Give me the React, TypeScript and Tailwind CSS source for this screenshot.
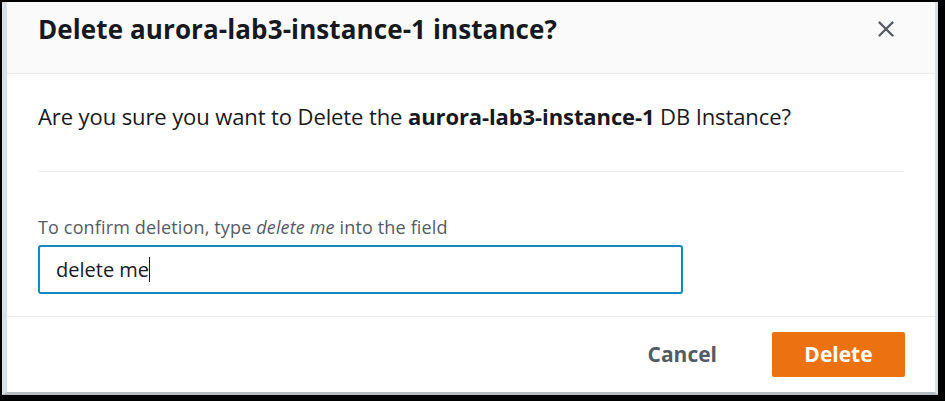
import { X } from 'lucide-react';

export default function App() {
    return (
        <div className="w-[945px] h-[401px] bg-black pt-[2px] pl-[2px] pr-[7px] pb-[6px] font-['Open_Sans',sans-serif]">
            <div className="h-full flex flex-col bg-white border-l-[5px] border-r-[3px] border-b-[3px] border-l-[#d9dfe3] border-r-[#d9dfe3] border-b-[#b4bcbf]">
                {/* Header */}
                <div className="h-[72px] shrink-0 flex items-start justify-between bg-[#fafafa] border-b border-[#eaeded] pl-[31px] pr-[36px] pt-[9px]">
                    <h2 className="text-[26px] leading-[36px] font-bold text-[#16191f] tracking-[0.1px]">
                        Delete aurora-lab3-instance-1 instance?
                    </h2>
                    <button className="mt-[5px] text-[#545b64]">
                        <X className="w-[26px] h-[26px]" strokeWidth={2.2} />
                    </button>
                </div>

                {/* Body */}
                <div className="flex-1 px-[31px] pt-[27px]">
                    <p className="text-[22px] leading-[30px] text-[#16191f] tracking-[-0.1px]">
                        Are you sure you want to Delete the <span className="font-bold">aurora-lab3-instance-1</span> DB Instance?
                    </p>
                    <div className="mt-[40px] border-t border-[#eaeded]" />
                    <label className="block mt-[42px] text-[18px] leading-[26px] text-[#545b64] tracking-[0.15px]">
                        To confirm deletion, type <em>delete me</em> into the field
                    </label>
                    <div className="mt-[5px] w-[645px] h-[49px] flex items-center border-2 border-[#0f8bc2] rounded-[3px] pl-[16px]">
                        <span className="text-[20px] text-[#16191f]">delete me</span>
                        <span className="w-px h-[25px] bg-[#16191f]" />
                    </div>
                </div>

                {/* Footer */}
                <div className="h-[76px] shrink-0 flex items-center justify-end gap-[55px] border-t border-[#eaeded] pr-[30px]">
                    <button className="text-[21px] font-bold text-[#545b64]">Cancel</button>
                    <button className="w-[133px] h-[45px] bg-[#ec7211] rounded-[2px] text-[21px] font-bold text-white">
                        Delete
                    </button>
                </div>
            </div>
        </div>
    );
}
